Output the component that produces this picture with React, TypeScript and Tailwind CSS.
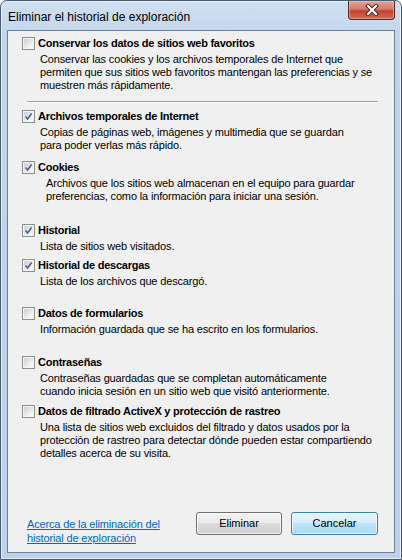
import React from 'react'

const BODY = "font-['Liberation_Sans',Arial,sans-serif] text-[11px] leading-[13px] tracking-[-0.15px] text-black"

type Item = {
  label: string
  checked: boolean
  lines: string[]
  gap: string
  indent?: string
}

const ITEMS: Item[] = [
  {
    label: 'Archivos temporales de Internet',
    checked: true,
    gap: 'mt-[7px]',
    lines: [
      'Copias de páginas web, imágenes y multimedia que se guardan',
      'para poder verlas más rápido.',
    ],
  },
  {
    label: 'Cookies',
    checked: true,
    gap: 'mt-[9px]',
    indent: 'pl-[24px]',
    lines: [
      'Archivos que los sitios web almacenan en el equipo para guardar',
      'preferencias, como la información para iniciar una sesión.',
    ],
  },
  {
    label: 'Historial',
    checked: true,
    gap: 'mt-[21px]',
    lines: ['Lista de sitios web visitados.'],
  },
  {
    label: 'Historial de descargas',
    checked: true,
    gap: 'mt-[6px]',
    lines: ['Lista de los archivos que descargó.'],
  },
  {
    label: 'Datos de formularios',
    checked: false,
    gap: 'mt-[19px]',
    lines: ['Información guardada que se ha escrito en los formularios.'],
  },
  {
    label: 'Contraseñas',
    checked: false,
    gap: 'mt-[20px]',
    lines: [
      'Contraseñas guardadas que se completan automáticamente',
      'cuando inicia sesión en un sitio web que visitó anteriormente.',
    ],
  },
  {
    label: 'Datos de filtrado ActiveX y protección de rastreo',
    checked: false,
    gap: 'mt-[7px]',
    lines: [
      'Una lista de sitios web excluidos del filtrado y datos usados por la',
      'protección de rastreo para detectar dónde pueden estar compartiendo',
      'detalles acerca de su visita.',
    ],
  },
]

function Check({ checked }: { checked: boolean }) {
  return (
    <span className="flex h-[13px] w-[13px] shrink-0 border border-[#8e8f8f] bg-[#f4f4f4] p-px">
      <span className="relative flex-1 bg-[linear-gradient(135deg,#cfcfcf,#f0f0f0_70%,#fafafa)]">
        {checked && (
          <svg viewBox="0 0 9 9" className="absolute inset-0 h-[9px] w-[9px]">
            <path d="M1.6 4.6 L3.6 7 L7.6 1.6" fill="none" stroke="#4b5e8f" strokeWidth="1.6" />
          </svg>
        )}
      </span>
    </span>
  )
}

function Option({ item }: { item: Item }) {
  return (
    <div className={item.gap}>
      <div className="flex h-[13px] items-center gap-[3px]">
        <Check checked={item.checked} />
        <span className="text-[11px] font-bold tracking-[-0.25px]">{item.label}</span>
      </div>
      <div className={`mt-[3px] ${item.indent ?? 'pl-[18px]'}`}>
        {item.lines.map((l) => (
          <div key={l} className="whitespace-nowrap">{l}</div>
        ))}
      </div>
    </div>
  )
}

function WinButton({ label, primary }: { label: string; primary?: boolean }) {
  return (
    <button
      className={
        primary
          ? 'h-[23px] w-[87px] rounded-[3px] border border-[#3c7fb1] bg-[linear-gradient(#e5f4fc,#d4edfb_50%,#bde5fa_50%,#a9daf4)] text-[11px] tracking-normal shadow-[inset_0_0_0_1px_rgba(255,255,255,0.7)]'
          : 'h-[23px] w-[86px] rounded-[3px] border border-[#707070] bg-[linear-gradient(#f2f2f2,#ebebeb_50%,#dddddd_50%,#cfcfcf)] text-[11px] tracking-normal shadow-[inset_0_0_0_1px_rgba(255,255,255,0.7)]'
      }
    >
      {label}
    </button>
  )
}

export default function App() {
  return (
    <div className="relative flex h-[560px] w-[402px] flex-col overflow-hidden rounded-t-[7px] border border-[#4a5b6e] bg-[linear-gradient(180deg,#d0e0f2,#c0d4ea_40px,#bdd1e8)] shadow-[inset_0_0_0_1px_rgba(255,255,255,0.55)]">
      {/* Title bar */}
      <div className="h-[29px] pl-[7px] pt-[8px] font-['Liberation_Sans',Arial,sans-serif] text-[12px] leading-[16px] text-black">
        Eliminar el historial de exploración
      </div>

      <div className="absolute right-[6px] top-0 flex h-[19px] w-[47px] items-center justify-center rounded-b-[4px] border border-t-0 border-[#5b2620] bg-[linear-gradient(#e3a597,#d0796a_45%,#c0442f_55%,#cf6a56)] shadow-[inset_0_0_0_1px_rgba(255,210,200,0.45)]">
        <svg viewBox="0 0 14 12" className="h-[12px] w-[14px]">
          <path d="M3 2 L11 10 M11 2 L3 10" stroke="#4a2a2a" strokeWidth="4" strokeLinecap="square" />
          <path d="M3 2 L11 10 M11 2 L3 10" stroke="#ffffff" strokeWidth="2" strokeLinecap="square" />
        </svg>
      </div>

      {/* Client area */}
      <div className={`mx-[6px] flex h-[523px] flex-col border border-[#6b7f96] bg-[#f0f0f0] ${BODY}`}>
        <div className="pl-[14px] pt-[6px]">
          <Option
            item={{
              label: 'Conservar los datos de sitios web favoritos',
              checked: false,
              gap: 'mt-0',
              lines: [
                'Conservar las cookies y los archivos temporales de Internet que',
                'permiten que sus sitios web favoritos mantengan las preferencias y se',
                'muestren más rápidamente.',
              ],
            }}
          />
        </div>

        <div className="ml-[19px] mr-[16px] mt-[9px] border-t border-b border-t-[#a0a0a0] border-b-white" />

        <div className="pl-[14px]">
          {ITEMS.map((it) => (
            <Option key={it.label} item={it} />
          ))}
        </div>

        <div className="mt-[52px] flex justify-between pl-[19px] pr-[16px]">
          <div className="mt-[5px] leading-[14px] text-[#0066cc] underline">
            <div>Acerca de la eliminación del</div>
            <div>historial de exploración</div>
          </div>
          <div className="flex gap-[9px]">
            <WinButton label="Eliminar" />
            <WinButton label="Cancelar" primary />
          </div>
        </div>
      </div>
    </div>
  )
}
